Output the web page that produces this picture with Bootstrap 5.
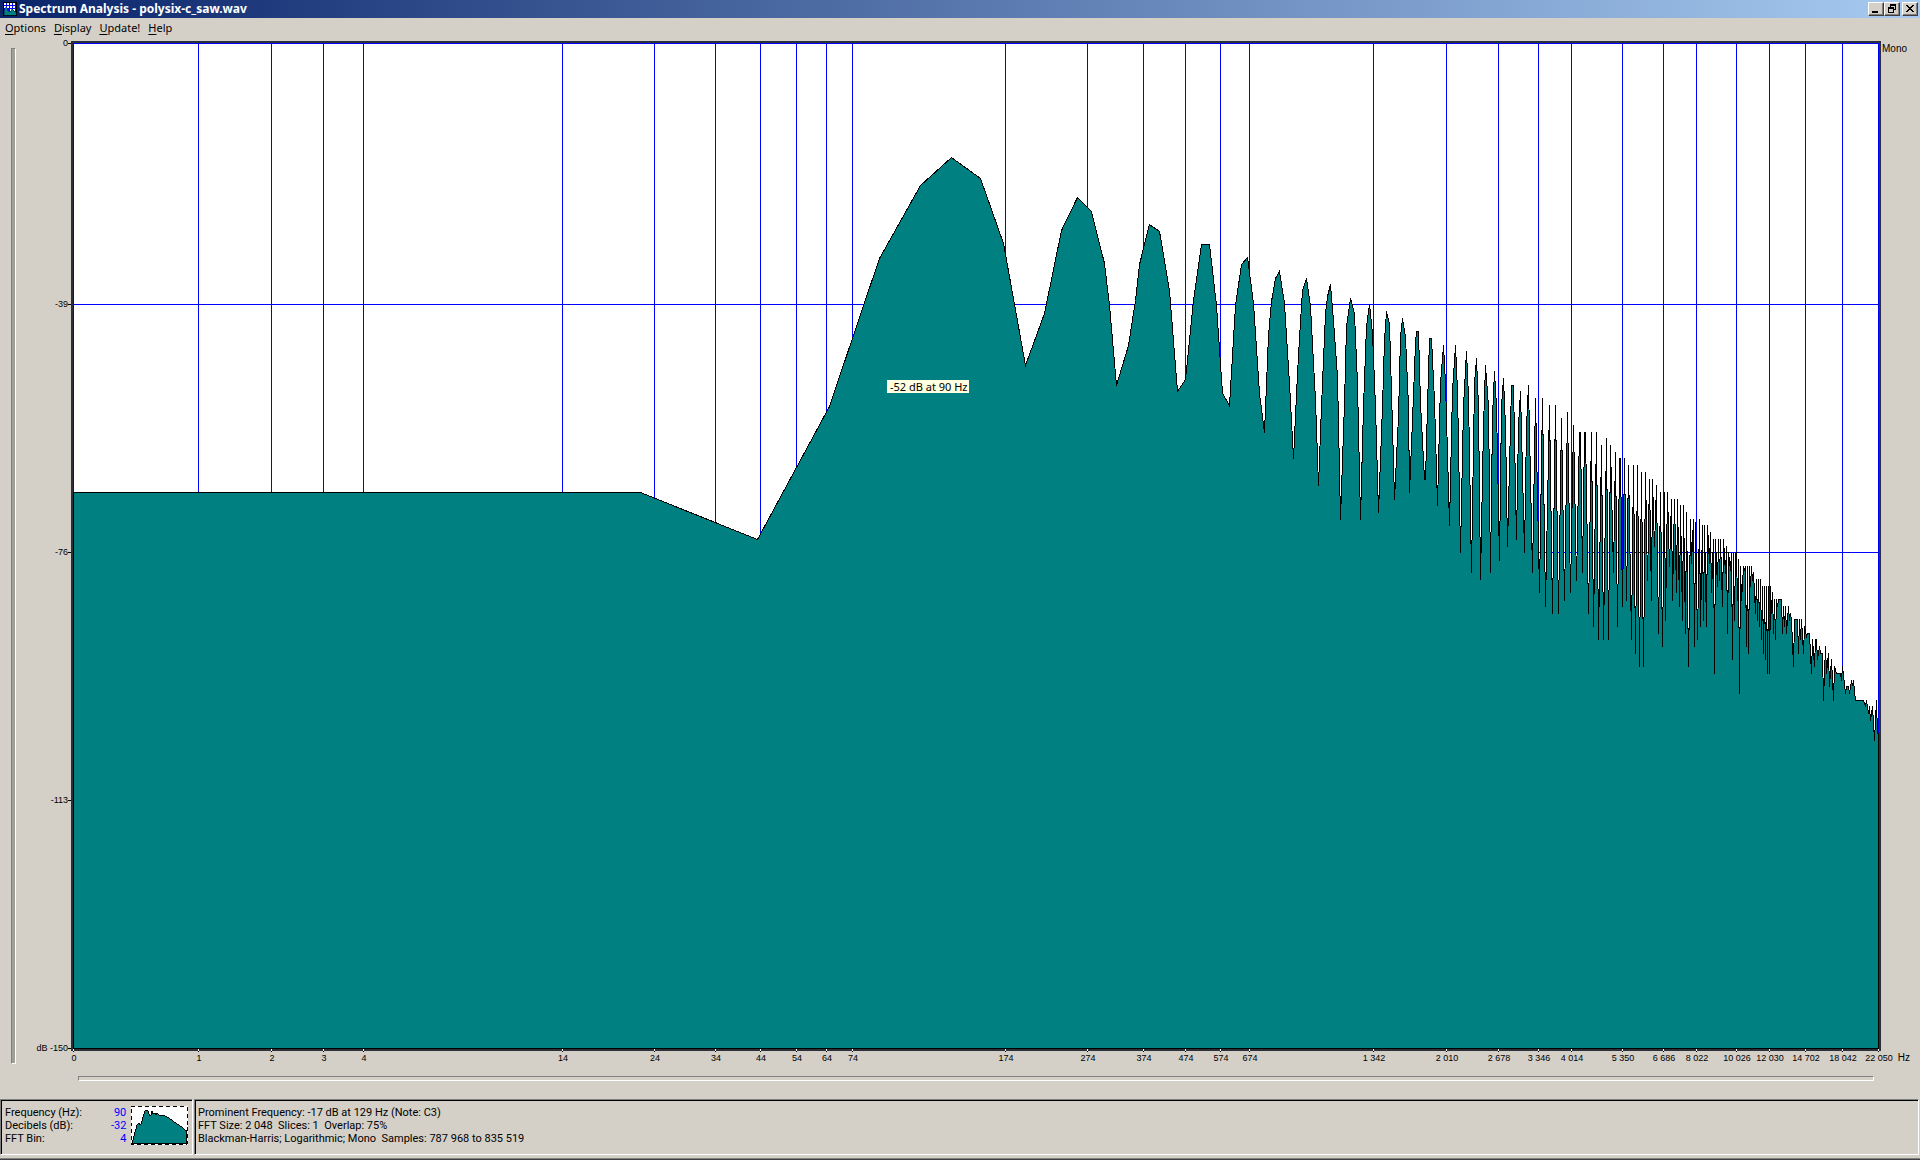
<!DOCTYPE html>
<html lang="en">
<head>
<meta charset="utf-8">
<meta name="viewport" content="width=device-width, initial-scale=1">
<title>Spectrum Analysis - polysix-c_saw.wav</title>
<link href="https://cdn.jsdelivr.net/npm/bootstrap@5.3.0/dist/css/bootstrap.min.css" rel="stylesheet">
<style>
  :root { --face: #d4d0c8; --ink: #000; --rail: #2b2f38; }
  body { background: var(--face); color: var(--ink); font: 11px/13px "Liberation Sans", Arial, sans-serif; }
  .caption-bar { height: 18px; padding: 0 2px 0 3px; background: linear-gradient(90deg, #0a246a, #a6caf0); color: #fff; font: bold 12px/14px "Noto Sans", "Open Sans", sans-serif; }
  .caption-text { margin-left: 2px; }
  .cap-btn { width: 16px; height: 14px; padding: 0; background: var(--face); border: 1px solid; border-color: #fff #404040 #404040 #fff; box-shadow: inset -1px -1px #808080; border-radius: 0; display: flex; }
  .cap-btn.close-btn { margin-left: 2px; }
  .cap-btn svg { display: block; width: 14px; height: 12px; }
  .menu-strip { height: 20px; padding-left: 5px; gap: 8px; font: 11px/20px "Noto Sans", sans-serif; }
  .menu-strip a { color: #000; text-decoration: none; }
  .menu-strip u { text-underline-offset: 2px; }
  .workspace { display: grid; grid-template: minmax(0, 1fr) 25px 6px 17px / 16px 55px minmax(0, 1fr) 39px; padding-top: 3px; min-height: 0; }
  .plot-frame { grid-area: 1 / 3; position: relative; border: 2px solid var(--rail); background: #fff; min-height: 0; }
  .plot-frame > svg { position: absolute; inset: 0; width: 100%; height: 100%; display: block; }
  .axis-y { grid-area: 1 / 2; position: relative; margin: 2px 0; }
  .axis-x { grid-area: 2 / 3; position: relative; margin: 0 2px; }
  .axis-y span, .axis-x span { position: absolute; white-space: nowrap; font-size: 9px; line-height: 10px; }
  .axis-y span { right: 3px; transform: translateY(-50%); }
  .axis-x span { top: 2px; transform: translateX(-50%); }
  .axis-y i, .axis-x i { position: absolute; background: #000; }
  .axis-y i { right: 0; width: 3px; height: 1px; }
  .axis-x i { top: 0; width: 1px; height: 1px; }
  .axis-x i::before { content: ""; position: absolute; left: 0; bottom: 1px; width: 1px; height: 2px; background: #fff; }
  .side-note { grid-area: 1 / 4; font-size: 10px; line-height: 12px; padding: 2px 0 0 1px; }
  .unit-note { grid-area: 2 / 4; font-size: 10px; line-height: 10px; padding-top: 2px; text-align: right; padding-right: 10px; }
  .groove { appearance: none; display: block; min-width: 0; margin: 0; border: 1px solid; border-color: #808080 #fff #fff #808080; background: var(--face); border-radius: 0; }
  .groove::-webkit-slider-thumb { appearance: none; width: 0; height: 0; }
  .groove-v { grid-area: 1 / 1 / 3 / 2; width: 5px; margin: 7px 0 12px 11px; height: auto; background: #a0a098; }
  .groove-h { grid-area: 3 / 3; margin: 0 7px 0 7px; width: auto; height: 5px; }
  .tip { position: absolute; left: 45.07%; top: 33.5%; background: #ffffe1; padding: 0 2px 0 3px; font: 11px/13px "Noto Sans", sans-serif; white-space: nowrap; }
  .status-strip { height: 61px; padding: 0 1px 4px 0; gap: 1px; }
  .status-pane { border: 1px solid; border-color: #808080 #fff #fff #808080; box-shadow: inset 1px 1px #000; font: 11px/13px Roboto, "Liberation Sans", sans-serif; }
  .readout { width: 193px; padding: 6px 4px; gap: 5px; align-items: flex-start; }
  .readout dl { width: 122px; grid-template-columns: 1fr auto; display: grid; }
  .readout dt { font-weight: 400; }
  .readout dd { margin: 0; color: #00f; text-align: right; }
  .summary-pane { padding: 6px 3px; white-space: pre; }
  .window-edge { border-bottom: 1px solid #404040; box-shadow: inset 0 -1px #808080; }
</style>
</head>
<body>
<div class="d-flex flex-column vh-100 overflow-hidden">
  <header class="caption-bar d-flex align-items-center">
    <svg width="14" height="14" viewBox="0 0 14 14" shape-rendering="crispEdges" aria-hidden="true">
      <path fill="#000" d="M0 0h14v14H0z"/><path fill="#00f" d="M1 1h12v9H1z"/>
      <path fill="#fff" d="M1 1h2v2H1zM4 1h2v2H4zM7 1h2v2H7zM10 1h2v2h-2zM1 4h2v2H1zM4 4h2v2H4zM7 4h2v2H7zM10 4h2v2h-2zM7 7h2v2H7zM10 7h2v2h-2z"/>
      <path fill="#008080" stroke="#024" stroke-width=".5" d="M1 13V9l2-4 1 1 1 3 2 1 2-3 2 2 2 2v2z"/>
    </svg>
    <span class="me-auto caption-text">Spectrum Analysis - polysix-c_saw.wav</span>
    <button class="cap-btn" type="button" aria-label="Minimize"><svg viewBox="0 0 14 12" shape-rendering="crispEdges"><path d="M3 8h6v2H3z"/></svg></button>
    <button class="cap-btn" type="button" aria-label="Restore"><svg viewBox="0 0 14 12" shape-rendering="crispEdges"><path d="M5 1h6v6H9V6h1V3H6v1H5zM3 4h6v6H3zm1 2v3h4V6z" fill-rule="evenodd"/></svg></button>
    <button class="cap-btn close-btn" type="button" aria-label="Close"><svg viewBox="0 0 14 12" shape-rendering="crispEdges"><path d="M3 2h2v1h1v1h2V3h1V2h2v1h-1v1H9v1H8v1h1v1h1v1h1v1H9V8H8V7H6v1H5v1H3V8h1V7h1V6h1V5H5V4H4V3H3z"/></svg></button>
  </header>
  <nav class="menu-strip d-flex">
    <a href="#"><u>O</u>ptions</a><a href="#"><u>D</u>isplay</a><a href="#"><u>U</u>pdate!</a><a href="#"><u>H</u>elp</a>
  </nav>
  <main class="workspace flex-fill">
    <input class="groove groove-v" type="range" aria-label="Vertical scale">
    <div class="axis-y" id="axisY"></div>
    <div class="plot-frame">
      <svg id="plot" viewBox="0 0 1806 1006" preserveAspectRatio="none" shape-rendering="crispEdges" role="img" aria-label="Frequency spectrum">
        <path id="grid" fill="none" stroke="#00f"/>
        <path id="curve" fill="#008080" stroke="#000"/>
      </svg>
      <div class="tip">-52 dB at 90 Hz</div>
    </div>
    <div class="side-note">Mono</div>
    <div class="axis-x" id="axisX"></div>
    <div class="unit-note">Hz</div>
    <input class="groove groove-h" type="range" aria-label="Horizontal scale">
  </main>
  <footer class="status-strip d-flex window-edge">
    <div class="status-pane readout d-flex">
      <dl class="mb-0">
        <dt>Frequency (Hz):</dt><dd>90</dd>
        <dt>Decibels (dB):</dt><dd>-32</dd>
        <dt>FFT Bin:</dt><dd>4</dd>
      </dl>
      <svg width="57" height="39" viewBox="0 0 57 39" shape-rendering="crispEdges" aria-hidden="true">
        <path fill="#fff" d="M0 0h57v39H0z"/>
        <path fill="#008080" stroke="#000" d="M1 38 6 19 8 17 9 19 10 18 14 5 15 4 17 5 19 10 20 9 21 5 22 8 24 7 25 9 26 7 28 9 33 9 38 12 45 17 51 21 56 25V38z"/>
        <path fill="none" stroke="#000" stroke-dasharray="4 3" d="M.5.500h56v38H.5z"/>
      </svg>
    </div>
    <div class="status-pane summary-pane flex-fill">Prominent Frequency: -17 dB at 129 Hz (Note: C3)
FFT Size: 2 048  Slices: 1  Overlap: 75%
Blackman-Harris; Logarithmic; Mono  Samples: 787 968 to 835 519</div>
  </footer>
</div>
<script src="https://cdn.jsdelivr.net/npm/bootstrap@5.3.0/dist/js/bootstrap.bundle.min.js"></script>
<script>
  const W = 1806, H = 1006;
  // Frequency ticks: [position, label]
  const ticks = [[0,'0'],[125,'1'],[198,'2'],[250,'3'],[290,'4'],[489,'14'],[581,'24'],[642,'34'],[687,'44'],[723,'54'],[753,'64'],[779,'74'],
    [932,'174'],[1014,'274'],[1070,'374'],[1112,'474'],[1147,'574'],[1176,'674'],[1300,'1 342'],[1373,'2 010'],[1425,'2 678'],[1465,'3 346'],
    [1498,'4 014'],[1549,'5 350'],[1590,'6 686'],[1623,'8 022'],[1663,'10 026'],[1696,'12 030'],[1732,'14 702'],[1769,'18 042'],[1805,'22 050']];
  const levels = [[0,'0'],[261,'-39'],[509,'-76'],[757,'-113'],[1005,'dB -150']];

  // Low bands, whole units of the plot
  const low = [0,449,567,449,684,496,756,363,787,271,806,215,847,142,878,114,907,135,930,200,932,211,952,322,971,270,988,187,1004,154,1018,168,1031,220,1036,262,
    1043,342,1055,302,1062,257,1066,221,1076,181,1086,188,1096,247,1104,348,1112,336,1120,257,1128,201,1136,201,1143,262,1149,350,1156,362,1162,262,1168,221];
  // Middle bands, thirds of a unit from (1107, 197)
  const mid = [203,52,220,190,237,460,253,577,266,285,275,185,285,115,298,95,314,190,328,430,340,655,352,400,361,245,368,150,379,115,391,200,405,480,415,737,
    425,500,437,220,443,170,451,133,461,240,472,410,482,838,492,490,500,260,511,175,523,220,533,430,542,838,551,500,560,260,568,193,578,280,587,500,596,818,
    606,500,613,300,619,213,629,250,638,560,643,778,655,530,662,290,667,235,675,290,684,500,688,757,698,540,706,310,709,273,715,273,722,490,732,718,737,718,
    742,500,748,295,754,295,762,480,772,797,780,430,790,316,797,430,803,640,808,857,817,450,826,316,833,450,841,938,850,500,858,334,865,470,874,998,
    883,430,889,355,896,500,901,1018,910,560,916,376,924,500,931,998,938,530,943,394,950,500,958,960,965,500,970,415,977,560,982,920,990,560,995,436,1000,436,
    1008,898,1015,560,1020,454,1033,938,1039,560,1045,436,1057,998,1066,475,1078,1057,1087,475];
  // High bands, thirds of a unit from (1427, 357)
  const high = [136,620,148,15,157,641,166,15,175,641,184,55,193,600,202,37,211,578,220,75,229,540,238,97,241,97,247,518,253,97,256,97,265,641,274,97,280,680,
    289,97,295,719,304,136,310,719,319,115,325,719,331,136,340,518,346,157,352,680,358,175,361,175,367,620,373,175,379,600,386,196,394,719,400,196,406,761,
    412,196,418,800,424,217,430,800,436,217,442,540,448,238,454,600,457,238,463,440,469,256,475,701,481,277,487,740,493,277,496,660,502,277,508,500,514,298,
    517,600,523,298,528,578,532,298,538,620,541,316,547,660,550,316,556,701,559,337,565,800,571,358,574,490,580,358,583,740,586,367,592,719,598,358,601,680,
    607,376,610,660,613,376,619,680,622,376,628,490,631,397,634,578,640,418,643,821,646,418,652,560,655,418,658,540,662,418,667,620,670,418,676,520,679,440,
    682,701,685,457,691,510,694,457,697,779,700,457,703,660,706,457,709,457,712,600,715,478,718,881,721,499,724,600,730,499,733,510,736,499,739,740,742,499,
    745,761,748,499,751,560,754,499,757,540,760,517,766,641,769,538,772,660,775,538,778,680,781,538,784,719,787,560,790,761,793,560,796,779,799,560,802,821,
    805,560,808,821,811,560,814,640,817,577,820,701,823,598,826,719,829,598,832,620,835,598,844,598,847,701,850,620,853,680,856,620,859,701,865,620,868,660,
    871,640,875,660,880,800,883,658,892,658,895,761,898,658,901,719,904,658,910,761,913,680,919,710,922,700,928,700,934,821,937,718,943,800,946,718,949,718,
    952,779,957,740,961,761,967,761,970,902,976,740,979,821,985,761,988,860,994,779,1000,902,1003,800,1009,821,1021,821,1024,842,1027,800,1036,881,1039,860,
    1045,860,1048,881,1054,842,1057,855,1060,842,1067,902,1090,902,1095,920,1100,902,1105,941,1108,920,1111,961,1117,920,1123,1022,1130,902,1133,1000,1135,1000];

  const points = [];
  function add(list, x0, y0, unit) {
    for (let i = 0; i < list.length; i += 2)
      points.push((x0 + Math.floor(list[i] / unit) + .5) + ' ' + (y0 + Math.floor(list[i + 1] / unit) + .5));
  }
  add(low, 0, 0, 1); add(mid, 1107, 197, 3); add(high, 1427, 357, 3);
  document.getElementById('curve').setAttribute('d', 'M.5 1005.5L' + points.join('L') + 'V1005.5Z');
  document.getElementById('grid').setAttribute('d',
    ticks.map(t => `M${t[0] + .5} 0V${H}`).join('') + levels.map(l => `M0 ${l[0] + .5}H${W}`).join(''));
  document.getElementById('axisX').innerHTML = ticks.map(([x, s]) =>
    `<i style="left:${x / W * 100}%"></i><span style="left:${(x + 1) / W * 100}%">${s}</span>`).join('');
  document.getElementById('axisY').innerHTML = levels.map(([y, s]) =>
    `<i style="top:${y / H * 100}%"></i><span style="top:${y / H * 100}%">${s}</span>`).join('');
</script>
</body>
</html>
